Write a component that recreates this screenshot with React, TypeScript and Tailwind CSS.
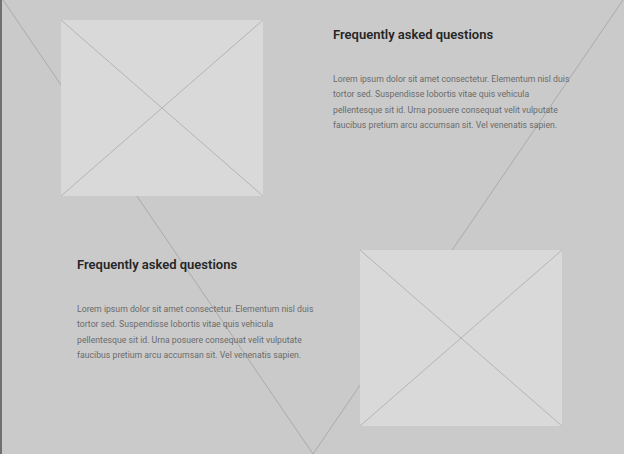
import React from "react";

function Placeholder() {
  return (
    <div className="relative w-[202px] h-[176px] shrink-0 bg-[#d9d9d9]">
      <svg className="absolute inset-0 w-full h-full" viewBox="0 0 202 176" preserveAspectRatio="none">
        <line x1="0" y1="0" x2="202" y2="176" stroke="#ababab" strokeWidth="0.8" />
        <line x1="202" y1="0" x2="0" y2="176" stroke="#ababab" strokeWidth="0.8" />
      </svg>
    </div>
  );
}

function TextBlock() {
  return (
    <div className="w-[240px] shrink-0 pt-[6px] relative z-10" style={{ fontFamily: "Roboto, 'Noto Sans', sans-serif" }}>
      <h2 className="text-[13px] leading-[18px] font-semibold text-[#262626]">Frequently asked questions</h2>
      <p className="mt-[28px] text-[8.7px] leading-[15.3px] text-[#6a6a6a]">
        <span className="block whitespace-nowrap">Lorem ipsum dolor sit amet consectetur. Elementum nisl duis</span>
        <span className="block whitespace-nowrap">tortor sed. Suspendisse lobortis vitae quis vehicula</span>
        <span className="block whitespace-nowrap">pellentesque sit id. Urna posuere consequat velit vulputate</span>
        <span className="block whitespace-nowrap">faucibus pretium arcu accumsan sit. Vel venenatis sapien.</span>
      </p>
    </div>
  );
}

export default function App() {
  return (
    <div className="relative w-[624px] h-[454px] overflow-hidden bg-[#cacaca] border-l-2 border-[#707070]">
      <svg className="absolute left-0 top-0 w-[622px] h-[908px]" viewBox="0 0 622 908" preserveAspectRatio="none">
        <line x1="1" y1="0" x2="621" y2="908" stroke="#a2a2a2" strokeWidth="0.8" />
        <line x1="621" y1="0" x2="1" y2="908" stroke="#a2a2a2" strokeWidth="0.8" />
      </svg>
      <div className="relative flex flex-col">
        <div className="flex items-start pt-[20px] pl-[59px] gap-[70px]">
          <Placeholder />
          <TextBlock />
        </div>
        <div className="flex items-start mt-[54px] pl-[75px] gap-[43px]">
          <TextBlock />
          <Placeholder />
        </div>
      </div>
    </div>
  );
}
